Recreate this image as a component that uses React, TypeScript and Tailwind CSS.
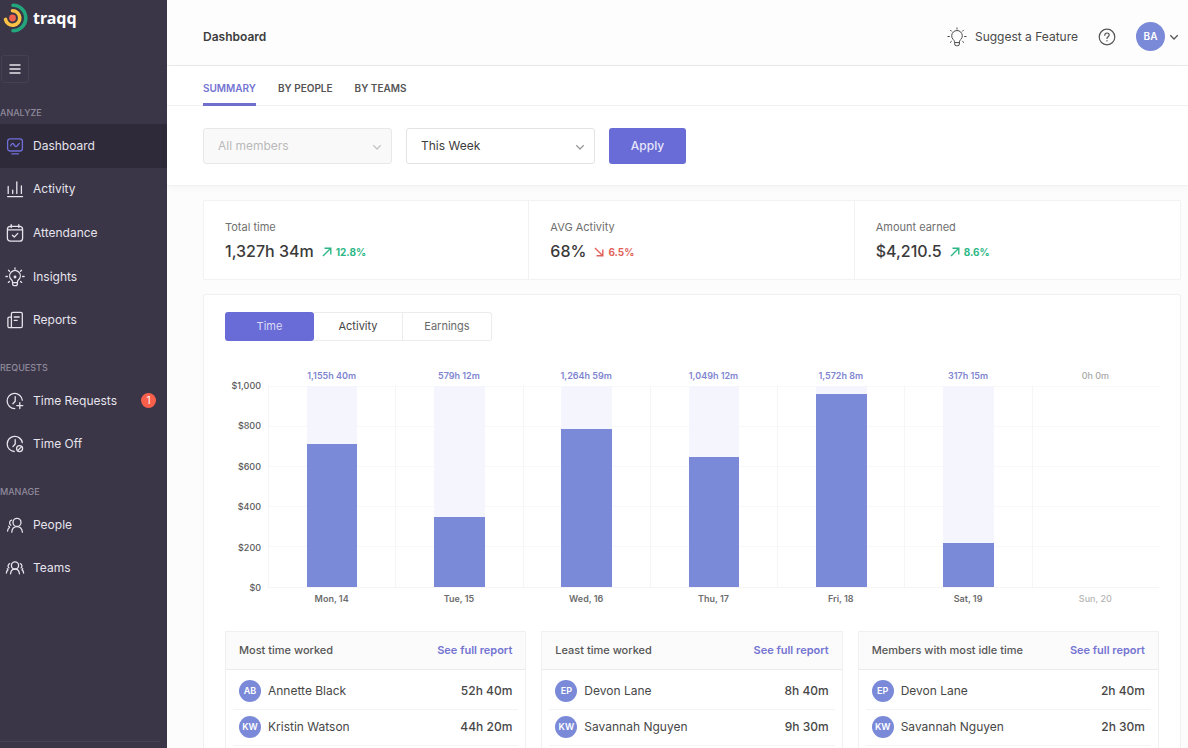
import type { ReactNode } from "react";

type IconProps = { children: ReactNode; className?: string };

function Icon({ children, className = "size-5" }: IconProps) {
  return (
    <svg
      viewBox="0 0 20 20"
      className={`shrink-0 ${className}`}
      fill="none"
      stroke="currentColor"
      strokeWidth="1.3"
      strokeLinecap="round"
      strokeLinejoin="round"
      aria-hidden="true"
    >
      {children}
    </svg>
  );
}

const dashboardIcon = (
  <Icon className="size-5 text-[#6f6fd8]">
    <rect x="2.6" y="2.8" width="14.8" height="12.2" rx="2.6" />
    <path d="M5.6 9.8c1.2-2.6 2.4-3 3.4-1.2s2 2.6 3 1.4l2.4-2.6M6.8 17.9h6.6" />
  </Icon>
);

const activityIcon = (
  <Icon>
    <path d="M2.6 17.6h15M3.2 7.4v7M7.7 11.2v3.2M11.8 3v11.4M16.4 6.8v7.6" />
  </Icon>
);

const attendanceIcon = (
  <Icon>
    <rect x="2.4" y="3.4" width="15.2" height="14.8" rx="3" />
    <path d="M2.6 6.8h14.8M6.2 1.6v3M13.8 1.6v3M7.4 12.2l1.9 1.8 3.5-3.6" />
  </Icon>
);

function BulbIcon({ className, light }: { className?: string; light?: boolean }) {
  return (
    <Icon className={className}>
      <g strokeWidth={light ? 1 : 1.3}>
        <path d="M7.6 15.2c0-1.5-.7-2-1.6-2.9a5.3 5.3 0 1 1 8 0c-.9.9-1.6 1.4-1.6 2.9v1.900a1.600 1.600 0 0 1-1.600 1.600H9.200a1.600 1.600 0 0 1-1.600-1.600zM7.700 15.600h4.600M10 .9v1.200M.9 9.500h1.500M17.600 9.500h1.500M3.500 3.200l1 1M16.500 3.200l-1 1M3.300 15.400l1.100-1M16.700 15.400l-1.100-1" />
        {!light && <circle cx="10" cy="10" r="0.800" />}
      </g>
    </Icon>
  );
}

const reportsIcon = (
  <Icon>
    <path d="M6.400 17.700V3.800a1.500 1.500 0 0 1 1.500-1.500h7.900a1.500 1.500 0 0 1 1.500 1.500v12.400a1.500 1.500 0 0 1-1.500 1.500H4.400a1.500 1.500 0 0 1-1.500-1.500V8.400a1.300 1.300 0 0 1 1.300-1.300h2.200M9.200 7h5M9.200 10.300h3" />
  </Icon>
);

const timeRequestsIcon = (
  <Icon>
    <path d="M17.300 9.200A7.600 7.600 0 1 0 9.800 17.600M10.200 5.600v4.600l-2.300 2.600M14.800 11.600v6M11.800 14.600h6" />
  </Icon>
);

const timeOffIcon = (
  <Icon>
    <path d="M17.300 8.600A7.600 7.600 0 1 0 9.200 17.500M10.200 5.600v4.400l-2.300 2.600" />
    <circle cx="14.600" cy="14.600" r="3" />
    <path d="M12.600 16.600l4-4" />
  </Icon>
);

const peopleIcon = (
  <Icon>
    <circle cx="12" cy="7.400" r="4" />
    <path d="M6.800 17.200c.2-3.700 2.300-5.600 5.200-5.600s5 1.900 5.400 5.600M6.600 5.200c-2.200.5-2.800 3.600-.7 5M2.600 16c.1-1.900.8-3 2-3.500l-1-1.300" />
  </Icon>
);

const teamsIcon = (
  <Icon>
    <circle cx="10" cy="7.400" r="3.600" />
    <path d="M5.600 15.800c.2-3 2-4.600 4.400-4.600s4.200 1.600 4.400 4.600M4.700 5.700C2.900 6.300 2.500 8.700 4 9.900M1.400 15c.1-1.700.6-2.600 1.600-3.100l-.8-1.200M15.300 5.700c1.800.6 2.200 3 .7 4.200M18.600 15c-.1-1.700-.6-2.600-1.600-3.100l.8-1.200" />
  </Icon>
);

function Chevron({ className }: { className: string }) {
  return (
    <svg viewBox="0 0 10 10" className={className} fill="none" stroke="currentColor" strokeWidth="1.3" aria-hidden="true">
      <path d="M1.300 3.300L5 7l3.700-3.700" />
    </svg>
  );
}

type NavItem = { label: string; icon: ReactNode; active?: boolean; badge?: number };

const sections: { title: string; rows: string; items: NavItem[] }[] = [
  {
    title: "ANALYZE",
    rows: "h-[218px]",
    items: [
      { label: "Dashboard", icon: dashboardIcon, active: true },
      { label: "Activity", icon: activityIcon },
      { label: "Attendance", icon: attendanceIcon },
      { label: "Insights", icon: <BulbIcon /> },
      { label: "Reports", icon: reportsIcon },
    ],
  },
  {
    title: "REQUESTS",
    rows: "h-[87px]",
    items: [
      { label: "Time Requests", icon: timeRequestsIcon, badge: 1 },
      { label: "Time Off", icon: timeOffIcon },
    ],
  },
  {
    title: "MANAGE",
    rows: "h-[87px]",
    items: [
      { label: "People", icon: peopleIcon },
      { label: "Teams", icon: teamsIcon },
    ],
  },
];

function Sidebar() {
  return (
    <aside className="flex w-[167px] shrink-0 flex-col bg-[#3a3547] text-[#e6e4ec]">
      <a href="#home" className="flex h-9 items-center gap-1 pl-[3px] text-white">
        <svg viewBox="0 0 26 30" className="h-[30px] w-[26px]" fill="none" strokeLinecap="round" aria-hidden="true">
          <path d="M10 2.200a12.800 12.800 0 0 1 0 25.600" stroke="#24a67d" strokeWidth="3.600" />
          <path d="M9.500 7.800a7.200 7.200 0 1 1-7 8.600" stroke="#fbc246" strokeWidth="3.600" />
          <circle cx="9.500" cy="15" r="3.400" fill="#f0604d" />
        </svg>
        <span className="font-['Noto_Sans',sans-serif] text-[16px] leading-5 font-bold">traqq</span>
      </a>
      <div className="py-[19px] pl-px">
        <button
          type="button"
          aria-label="Toggle menu"
          className="flex size-7 items-center justify-center rounded-[3px] border border-[#454053]"
        >
          <svg viewBox="0 0 12 12" className="size-3" stroke="currentColor" strokeWidth="1.300" aria-hidden="true">
            <path d="M.5 2h11M.5 6h11M.5 10h11" />
          </svg>
        </button>
      </div>
      <nav className="flex flex-col gap-[15px]">
        {sections.map((section) => (
          <section key={section.title}>
            <h2 className="flex h-[22px] items-center text-[9px] font-medium text-[#8f8b9b]">{section.title}</h2>
            <ul className={`grid auto-rows-fr ${section.rows}`}>
              {section.items.map((item) => (
                <li key={item.label} className="flex">
                  <a
                    href={`#${item.label.toLowerCase().replace(" ", "-")}`}
                    className={`flex flex-1 items-center gap-2 pl-[5px] text-[12px] ${item.active ? "bg-[#2e2a39]" : ""}`}
                  >
                    {item.icon}
                    <span>{item.label}</span>
                    {item.badge && (
                      <span className="mr-[11px] ml-auto flex size-[15px] items-center justify-center rounded-full bg-[#f9604c] text-[10px] text-white">
                        {item.badge}
                      </span>
                    )}
                  </a>
                </li>
              ))}
            </ul>
          </section>
        ))}
      </nav>
      <div className="mt-auto mr-[7px] mb-[6px] border-t border-[#454053]" />
    </aside>
  );
}

function Header() {
  return (
    <header className="flex h-[66px] items-center border-b border-[#ebebeb] bg-[#fdfdfd] pt-2 pr-[9px] pl-9">
      <h1 className="flex-1 text-[12px] font-semibold text-[#3c3c3c]">Dashboard</h1>
      <button type="button" className="flex items-center gap-2 text-[12px] text-[#4a4a4a]">
        <BulbIcon className="size-5" light />
        Suggest a Feature
      </button>
      <button type="button" aria-label="Help" className="ml-5 text-[#555]">
        <svg viewBox="0 0 18 18" className="size-[18px]" fill="none" stroke="currentColor" strokeWidth="1.200" strokeLinecap="round" aria-hidden="true">
          <circle cx="9" cy="9" r="7.800" />
          <path d="M6.800 7.300c0-1.400 1-2.300 2.200-2.300s2.200.9 2.200 2.100c0 1.600-2.200 1.700-2.200 3.300M9 12.700v.2" />
        </svg>
      </button>
      <button type="button" aria-label="Account" className="ml-5 flex items-center gap-1 text-[#555]">
        <span className="flex size-[29px] items-center justify-center rounded-full bg-[#7a8ad8] text-[10px] font-semibold text-white">
          BA
        </span>
        <Chevron className="size-[10px]" />
      </button>
    </header>
  );
}

function Filters() {
  return (
    <form className="flex items-center gap-[14px] px-9 pt-[22px] pb-[21px]" onSubmit={(e) => e.preventDefault()}>
      <div className="relative w-[189px]">
        <select
          disabled
          aria-label="Members"
          className="block h-9 w-full appearance-none rounded-[3px] border border-[#e8e8e8] bg-[#f9f9f9] px-[14px] text-[12px] text-[#b9b9b9] opacity-100"
        >
          <option>All members</option>
        </select>
        <Chevron className="pointer-events-none absolute top-[14px] right-[10px] size-[10px] text-[#c4c4c4]" />
      </div>
      <div className="relative w-[189px]">
        <select
          aria-label="Period"
          className="block h-9 w-full appearance-none rounded-[3px] border border-[#e3e3e3] bg-white px-[14px] text-[12px] text-[#3c3c3c]"
        >
          <option>This Week</option>
        </select>
        <Chevron className="pointer-events-none absolute top-[14px] right-[10px] size-[10px] text-[#9a9a9a]" />
      </div>
      <button type="submit" className="h-9 w-[77px] rounded-[3px] bg-[#696bd6] text-[12px] font-medium text-[#e6e6fa]">
        Apply
      </button>
    </form>
  );
}

const stats = [
  { label: "Total time", value: "1,327h 34m", change: "12.8%", up: true },
  { label: "AVG Activity", value: "68%", change: "6.5%", up: false },
  { label: "Amount earned", value: "$4,210.5", change: "8.6%", up: true },
];

function Stats() {
  return (
    <dl className="grid grid-cols-3 divide-x divide-[#f2f2f2] rounded-[2px] border border-[#f2f2f2] bg-white">
      {stats.map((s) => (
        <div key={s.label} className="flex flex-col gap-1 px-[21px] pt-[18px] pb-4">
          <dt className="text-[11px] leading-4 text-[#6f6f6f]">{s.label}</dt>
          <dd className="flex items-center gap-2">
            <span className="text-[16px] leading-6 font-medium text-[#3a3a3a]">{s.value}</span>
            <span
              className={`flex items-center gap-1 pt-[2px] text-[10px] font-bold ${s.up ? "text-[#2cb886]" : "text-[#e2625a]"}`}
            >
              <svg viewBox="0 0 10 10" className="size-[10px]" fill="none" stroke="currentColor" strokeWidth="1.400" aria-hidden="true">
                {s.up ? <path d="M1 9l7.500-7.500M2.500 1.200h6.300v6.300" /> : <path d="M1 1l7.500 7.500M2.500 8.800h6.300V2.500" />}
              </svg>
              {s.change}
            </span>
          </dd>
        </div>
      ))}
    </dl>
  );
}

const ticks = ["$1,000", "$800", "$600", "$400", "$200", "$0"];

const days = [
  { day: "Mon, 14", time: "1,155h 40m", percent: 71 },
  { day: "Tue, 15", time: "579h 12m", percent: 34.7 },
  { day: "Wed, 16", time: "1,264h 59m", percent: 78.5 },
  { day: "Thu, 17", time: "1,049h 12m", percent: 64.7 },
  { day: "Fri, 18", time: "1,572h 8m", percent: 95.8 },
  { day: "Sat, 19", time: "317h 15m", percent: 22 },
  { day: "Sun, 20", time: "0h 0m", percent: 0 },
];

function Chart() {
  return (
    <div className="mt-[29px] flex">
      <div className="flex h-[226px] w-9 flex-col justify-between pt-2 text-right text-[9px] leading-4 font-medium text-[#5a5a5a]">
        {ticks.map((t) => (
          <span key={t}>{t}</span>
        ))}
      </div>
      <div className="ml-[7px] grid flex-1 grid-cols-7">
        {days.map((d) => (
          <div key={d.day} className="text-center text-[9px] leading-3 font-semibold">
            <div className={`h-4 ${d.percent ? "text-[#8085d0]" : "font-medium text-[#a8a8a8]"}`}>{d.time}</div>
            <div className="relative flex h-[202px] justify-center border-b border-l border-[#f5f5f5]">
              <div className="absolute inset-0 grid grid-rows-5 divide-y divide-[#f8f8f8] border-t border-[#f8f8f8]">
                {ticks.slice(1).map((t) => (
                  <span key={t} />
                ))}
              </div>
              {d.percent > 0 && (
                <div className="relative flex w-2/5 flex-col justify-end bg-[#f5f5fd]">
                  <div className="bg-[#7a8ad8]" style={{ height: `${d.percent}%` }} />
                </div>
              )}
            </div>
            <div className={`pt-[5px] ${d.percent ? "text-[#6d6d6d]" : "font-medium text-[#b5b5b5]"}`}>{d.day}</div>
          </div>
        ))}
      </div>
    </div>
  );
}

const reports = [
  {
    title: "Most time worked",
    rows: [
      { initials: "AB", name: "Annette Black", time: "52h 40m" },
      { initials: "KW", name: "Kristin Watson", time: "44h 20m" },
    ],
  },
  {
    title: "Least time worked",
    rows: [
      { initials: "EP", name: "Devon Lane", time: "8h 40m" },
      { initials: "KW", name: "Savannah Nguyen", time: "9h 30m" },
    ],
  },
  {
    title: "Members with most idle time",
    rows: [
      { initials: "EP", name: "Devon Lane", time: "2h 40m" },
      { initials: "KW", name: "Savannah Nguyen", time: "2h 30m" },
    ],
  },
];

function Reports() {
  return (
    <div className="mt-[26px] grid flex-1 grid-cols-3 gap-[15px]">
      {reports.map((r) => (
        <section key={r.title} className="border border-b-0 border-[#f0f0f0]">
          <div className="flex h-[38px] items-center justify-between border-b border-[#ebebeb] bg-[#fbfbfb] px-[13px] text-[11px]">
            <h2 className="font-medium text-[#565656]">{r.title}</h2>
            <a href="#report" className="font-semibold text-[#7474d2]">
              See full report
            </a>
          </div>
          <div className="px-[7px] pt-[3px]">
            <table aria-label={r.title} className="w-full text-[12px] text-[#474747]">
              <tbody>
                {r.rows.map((row) => (
                  <tr key={row.name} className="h-9 border-b border-[#f4f4f4]">
                    <td className="pl-[6px]">
                      <div className="flex items-center gap-[7px]">
                        <span className="flex size-[22px] items-center justify-center rounded-full bg-[#7a8ad8] text-[9px] font-semibold text-white">
                          {row.initials}
                        </span>
                        {row.name}
                      </div>
                    </td>
                    <td className="pr-[6px] text-right font-medium">{row.time}</td>
                  </tr>
                ))}
              </tbody>
            </table>
          </div>
        </section>
      ))}
    </div>
  );
}

export default function App() {
  return (
    <div className="flex h-screen overflow-hidden bg-[#fcfcfc] font-['Inter',sans-serif]">
      <Sidebar />
      <main className="flex min-w-0 flex-1 flex-col">
        <Header />
        <div className="border-b border-[#f0f0f0] bg-white shadow-[0_2px_8px_rgba(0,0,0,0.03)]">
          <nav className="flex h-10 gap-[22px] border-b border-[#f0f0f0] px-9 text-[10px] font-semibold text-[#555]">
            <button type="button" className="-mb-px border-b-[3px] border-[#6f6fcb] pt-[7px] text-[#7474d2]">
              SUMMARY
            </button>
            <button type="button" className="-mb-px border-b-[3px] border-transparent pt-[7px]">
              BY PEOPLE
            </button>
            <button type="button" className="-mb-px border-b-[3px] border-transparent pt-[7px]">
              BY TEAMS
            </button>
          </nav>
          <Filters />
        </div>
        <div className="flex min-h-0 flex-1 flex-col gap-[14px] pt-[14px] pr-[7px] pl-9">
          <Stats />
          <div className="flex flex-1 flex-col rounded-t-[3px] border border-b-0 border-[#f0f0f0] bg-white px-[21px] pt-[17px]">
            <div className="flex text-[11px] text-[#6b6b6b]">
              <button type="button" className="h-[29px] w-[89px] rounded-[3px] bg-[#696bd6] text-[#dcdcf8]">
                Time
              </button>
              <button type="button" className="h-[29px] w-[89px] border-y border-r border-[#ececec] text-[#444]">
                Activity
              </button>
              <button type="button" className="h-[29px] w-[89px] rounded-r-[3px] border-y border-r border-[#ececec]">
                Earnings
              </button>
            </div>
            <Chart />
            <Reports />
          </div>
        </div>
      </main>
    </div>
  );
}
